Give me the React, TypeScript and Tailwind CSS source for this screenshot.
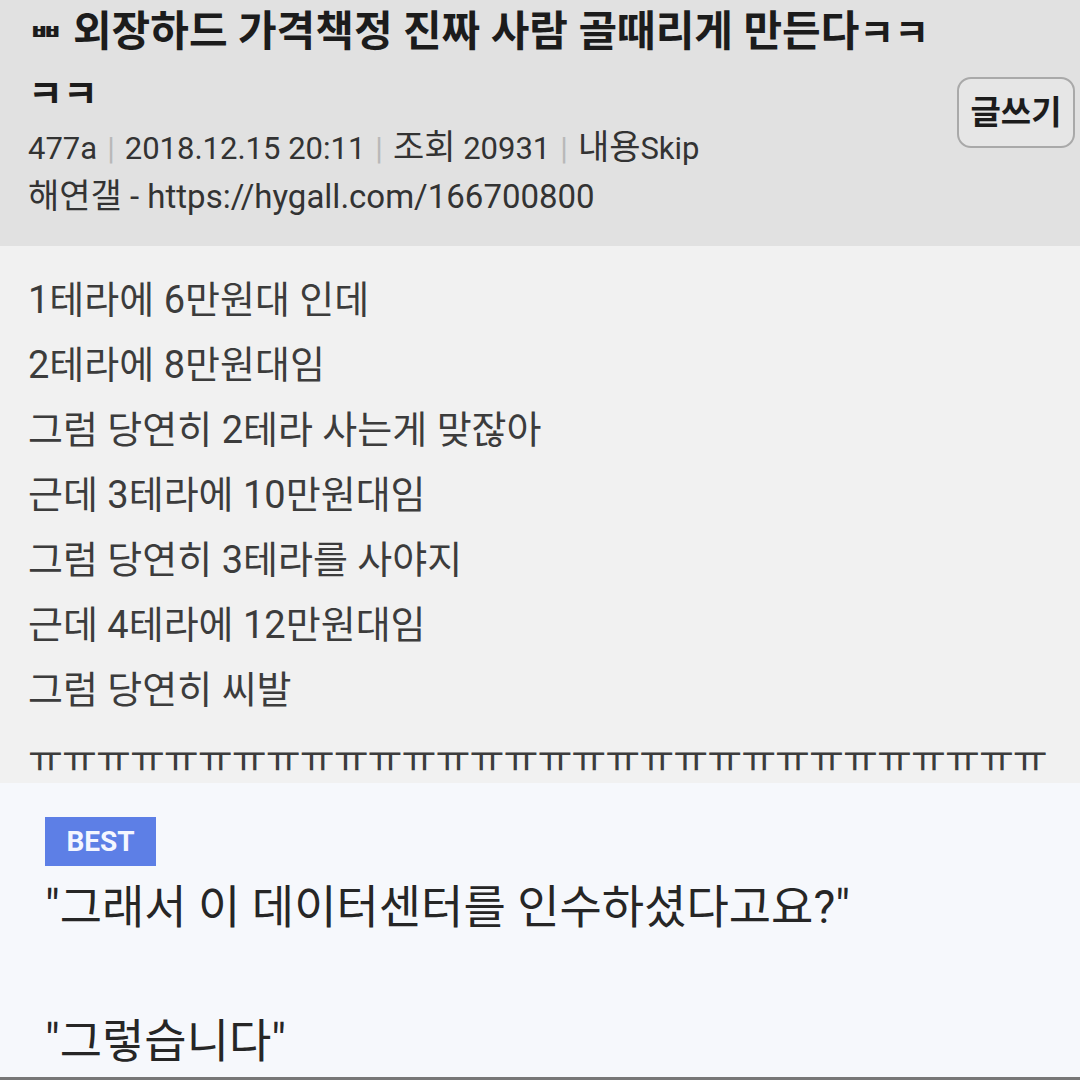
const font = { fontFamily: "Roboto, 'Noto Sans CJK KR', sans-serif" };

const lines = [
  "1테라에 6만원대 인데",
  "2테라에 8만원대임",
  "그럼 당연히 2테라 사는게 맞잖아",
  "근데 3테라에 10만원대임",
  "그럼 당연히 3테라를 사야지",
  "근데 4테라에 12만원대임",
  "그럼 당연히 씨발",
];

function Sep() {
  return <span className="mx-[10px] text-[#b8b8b8]">|</span>;
}

function Ko({ children }: { children: React.ReactNode }) {
  return <span className="text-[34px] leading-none">{children}</span>;
}

export default function App() {
  return (
    <div className="w-[1080px] h-[1080px] overflow-hidden flex flex-col" style={font}>
      {/* post header */}
      <div className="h-[246px] bg-[#e1e1e1] flex pl-[28px] pr-[5px]">
        <div className="flex-1 pt-[2px]">
          <h1 className="text-[42px] leading-[60px] font-bold text-[#1c1c1c] whitespace-nowrap">
            <span className="inline-block text-[38px] leading-none scale-y-[0.55] mr-[10px] align-[1px]">ㅃ</span>
            외장하드 가격책정 진짜 사람 골때리게 만든다<span className="text-[38px]">ㅋㅋ</span>
            <br />
            <span className="text-[38px]">ㅋㅋ</span>
          </h1>
          <div className="text-[31px] leading-[48px] text-[#333] mt-[1px] whitespace-nowrap">
            477a<Sep />2018.12.15 20:11<Sep /><Ko>조회</Ko> 20931<Sep /><Ko>내용</Ko>Skip
          </div>
          <div className="text-[33px] leading-[48px] text-[#333] whitespace-nowrap">
            <Ko>해연갤</Ko> - https://hygall.com/166700800
          </div>
        </div>
        <div className="pt-[77px]">
          <button className="w-[118px] h-[71px] rounded-[14px] border-2 border-[#a9a9a9] bg-[#e6e6e6] text-[33px] font-bold text-[#1c1c1c]">
            글쓰기
          </button>
        </div>
      </div>

      {/* post body */}
      <div className="h-[537px] bg-[#f1f1f1] overflow-hidden pl-[28px] pt-[22px] text-[38px] leading-[65px] text-[#3c3c3c]">
        {lines.map((l) => (
          <div key={l}>{l}</div>
        ))}
        <div className="tracking-[-1px] whitespace-nowrap mt-[4px]">{"ㅠ".repeat(30)}</div>
      </div>

      {/* best comment */}
      <div className="flex-1 bg-[#f6f8fc] border-b-[3px] border-[#777] pl-[45px] pt-[34px]">
        <div className="w-[111px] h-[49px] bg-[#5d7fe6] text-[#f4f6ff] font-bold text-[28px] flex items-center justify-center">
          BEST
        </div>
        <div className="text-[46px] leading-[67px] text-[#262626] mt-[8px] whitespace-nowrap">
          "그래서 이 데이터센터를 인수하셨다고요?"
          <br />
          <br />
          "그렇습니다"
        </div>
      </div>
    </div>
  );
}
